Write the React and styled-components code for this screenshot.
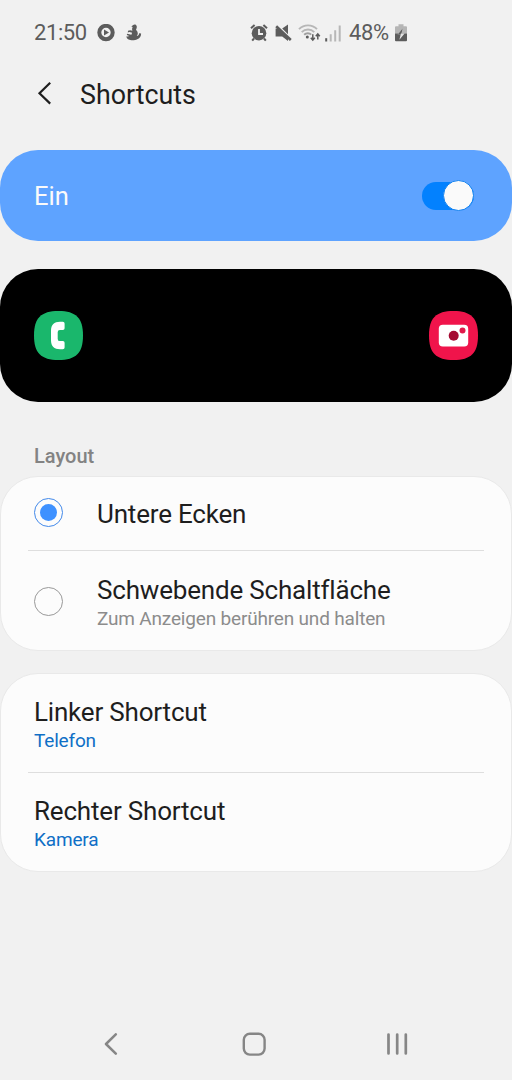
import React, { useState } from 'react';
import styled, { createGlobalStyle } from 'styled-components';

const GlobalStyle = createGlobalStyle`
  * {
    box-sizing: border-box;
  }

  body {
    margin: 0;
    background: #f1f1f1;
    font-family: Roboto, "Liberation Sans", sans-serif;
  }

  svg {
    display: block;
    flex: none;
  }
`;

const Screen = styled.div`
  width: 512px;
  height: 1080px;
  display: flex;
  flex-direction: column;
  background: #f1f1f1;
  overflow: hidden;
`;

const StatusBar = styled.div`
  height: 66px;
  padding: 0 105px 0 34px;
  display: flex;
  align-items: center;
  justify-content: space-between;
  color: #5c5c5c;
  font-size: 22px;
  line-height: 26px;
`;

const StatusGroup = styled.div`
  display: flex;
  align-items: center;
`;

const StatusText = styled.span`
  width: ${({ $width }) => $width}px;
  margin-left: ${({ $gap }) => $gap || 0}px;
  white-space: nowrap;
  letter-spacing: -0.4px;
`;

const StatusIcon = styled.svg`
  margin-left: ${({ $gap }) => $gap}px;
`;

const Header = styled.header`
  height: 84px;
  padding: 13px 0 0 37px;
  display: flex;
  align-items: flex-start;
`;

const BackButton = styled.button`
  width: 43px;
  height: 28px;
  padding: 0;
  border: 0;
  background: none;
  display: flex;
  align-items: center;
`;

const Title = styled.h1`
  margin: 0;
  font-size: 26.8px;
  line-height: 32px;
  font-weight: 400;
  color: #1e1e1e;
`;

const SwitchBar = styled.div`
  height: 91px;
  padding: 0 38px 0 34px;
  display: flex;
  align-items: center;
  justify-content: space-between;
  border-radius: 38px;
  background: #5ea3ff;
  color: #fafafa;
  font-size: 25.5px;
`;

const Switch = styled.button`
  width: 52px;
  height: 28px;
  padding: 0;
  border: 0;
  border-radius: 14px;
  display: flex;
  align-items: center;
  justify-content: ${({ $on }) => ($on ? 'flex-end' : 'flex-start')};
  background: ${({ $on }) => ($on ? '#0381fe' : '#9a9a9a')};
`;

const Knob = styled.span`
  flex: none;
  width: 31px;
  height: 31px;
  border: 1px solid #1583f0;
  border-radius: 50%;
  background: #fafafa;
`;

const Preview = styled.div`
  height: 133px;
  margin-top: 28px;
  padding: 0 34.5px 0 34px;
  display: flex;
  align-items: center;
  justify-content: space-between;
  border-radius: 38px;
  background: #000;
`;

const SectionLabel = styled.h2`
  margin: 0;
  height: 74px;
  padding: 43px 34px 0;
  font-size: 20px;
  line-height: 23px;
  font-weight: 500;
  color: #838383;
`;

const Card = styled.div`
  height: ${({ $height }) => $height}px;
  margin-bottom: 22px;
  border: 1px solid #e9e9e9;
  border-radius: 38px;
  background: #fcfcfc;
`;

const Row = styled.div`
  height: ${({ $height }) => $height}px;
  padding: ${({ $top }) => $top || 0}px 33px 0;
  display: flex;
  align-items: center;
`;

const Divider = styled.div`
  height: 1px;
  margin: 0 27px;
  background: #dedede;
`;

const Radio = styled.span`
  width: 29px;
  height: 29px;
  margin: 0 34px 2px 0;
  flex: none;
  display: flex;
  align-items: center;
  justify-content: center;
  border: 1.5px solid ${({ $checked }) => ($checked ? '#4289ea' : '#999')};
  border-radius: 50%;

  &::after {
    content: '';
    display: ${({ $checked }) => ($checked ? 'block' : 'none')};
    width: 17px;
    height: 17px;
    border-radius: 50%;
    background: #3e91ff;
  }
`;

const Label = styled.div`
  font-size: 26px;
  line-height: 30px;
  letter-spacing: -0.19px;
  color: #1e1e1e;
  white-space: nowrap;
`;

const Hint = styled.div`
  font-size: 19px;
  line-height: 22px;
  margin-top: 3px;
  letter-spacing: -0.18px;
  color: ${({ $accent }) => ($accent ? '#0f6fc6' : '#8c8c8c')};
  white-space: nowrap;
`;

const NavBar = styled.nav`
  height: 72px;
  margin-top: auto;
  padding: 0 104px;
  display: flex;
  align-items: center;
`;

const NavButton = styled.button`
  width: ${({ $width }) => $width}px;
  height: 24px;
  padding: 0;
  border: 0;
  background: none;
  display: flex;
  align-items: center;
`;

const LeftIcons = () => (
  <>
    <StatusIcon $gap={10} width="18" height="18" viewBox="0 0 18 18">
      <circle cx="9" cy="8.5" r="6.7" fill="none" stroke="#5c5c5c" strokeWidth="4" />
      <path d="M7 5.6l5 3-5 3z" fill="#5c5c5c" />
    </StatusIcon>
    <StatusIcon $gap={11} width="16" height="18" viewBox="0 0 16 18">
      <path
        d="M7.2.9C8.2-.1 10.6.3 10.8 2.4c.1 1.5-.5 2.5-.8 3.5 1.4.8 1.8 2.2 1.8 4l-1 2c1.3-.1 2.2-.8 2.3-2.7l2 .2c.1 2.7-1.5 5.2-3.9 5.9-2.1 1.2-6.6 1.3-8.6.2C1.2 14.8.3 13.5.5 12.3c.9.3 2 .2 2.8-.3L.8 11l.4-1.2 4.2.9.7-1.9-2.7-.8-1.6.4.2-1.6 2.1-.6 2.3.5c-.5-1.3-.4-3 .3-3.8L5.3 2.6z"
        fill="#5c5c5c"
      />
    </StatusIcon>
  </>
);

const AlarmIcon = () => (
  <StatusIcon $gap={0} width="18" height="18" viewBox="0 0 18 18">
    <path d="M1 4.3L4.6 1M17 4.3L13.4 1M4 14.5l-1.8 2.2M14 14.5l1.8 2.2" stroke="#5c5c5c" strokeWidth="2" fill="none" />
    <circle cx="9" cy="9.2" r="7.3" fill="#5c5c5c" />
    <path d="M9 5v5h4" fill="none" stroke="#f1f1f1" strokeWidth="1.8" />
  </StatusIcon>
);

const MuteIcon = () => (
  <StatusIcon $gap={7} width="17" height="18" viewBox="0 0 17 18">
    <path d="M.6 4.6h3.2L13 13.8V17l-5.8-4.4H.6zM7.2 4.6L13 .4v9.8z" fill="#5c5c5c" />
    <path d="M1.2 2.2L15.8 16" stroke="#5c5c5c" strokeWidth="2.6" />
  </StatusIcon>
);

const WifiIcon = () => (
  <StatusIcon $gap={6} width="24" height="18" viewBox="0 0 24 18">
    <g fill="none" stroke="#b7b7b7" strokeWidth="1.9">
      <path d="M1 5.2C6 .1 14 .1 19 5.2" />
      <path d="M3.7 8.1c3.5-3.5 9.1-3.5 12.6 0" />
    </g>
    <path d="M6.2 10.7c2-2 5.2-2 7 0" fill="none" stroke="#a0a0a0" strokeWidth="2" />
    <circle cx="9.3" cy="13" r="1.5" fill="#5c5c5c" />
    <path d="M14.8 10.3v5.4M12.8 13.8l2 2.3 2-2.3M19.8 15.6v-5.4M17.8 12.2l2-2.3 2 2.3" fill="none" stroke="#5c5c5c" strokeWidth="1.5" />
  </StatusIcon>
);

const SignalIcon = () => (
  <StatusIcon $gap={3} width="16" height="17" viewBox="0 0 16 17">
    <path d="M1.2 13.2v3.3" stroke="#5c5c5c" strokeWidth="2" />
    <path d="M5.7 9.2v7.3M10.2 5.2v11.3M14.7.6v15.9" stroke="#b7b7b7" strokeWidth="2" />
  </StatusIcon>
);

const BatteryIcon = () => (
  <StatusIcon $gap={6} width="12" height="18" viewBox="0 0 12 18">
    <path d="M3.5.3h5v2H11q1 0 1 1v6.5H0V3.3q0-1 1-1h2.5z" fill="#b5b5b5" />
    <path d="M0 9.5h12v6.8q0 1-1 1H1q-1 0-1-1z" fill="#5c5c5c" />
    <path d="M7.6 4.6l-5 6.2h3l-1.2 5 5.2-6.4H6.5z" fill="#e4e4e4" />
    <path d="M7.6 4.6l-5 6.2h3l.3-1.4h.6z" fill="#5c5c5c" />
  </StatusIcon>
);

// same squircle for both app icons
const squircle = 'M24.5 0C42 0 49 7 49 24.5S42 49 24.5 49 0 42 0 24.5 7 0 24.5 0z';

const PhoneIcon = () => (
  <svg width="49" height="49" viewBox="0 0 49 49">
    <path d={squircle} fill="#1ab76c" />
    <path
      d="M26 10.8h2.8q1.8 0 1.8 1.8v4.6q0 1.7-1.7 1.7h-3q-2.2 0-2.2 2.2v6.8q0 2.2 2.2 2.2h3q1.7 0 1.7 1.7v4.6q0 1.8-1.8 1.8H26c-5.8 0-9-3-9-9v-9.4c0-6 3.2-9 9-9z"
      fill="#fff"
    />
  </svg>
);

const CameraIcon = () => (
  <svg width="49" height="49" viewBox="0 0 49 49">
    <path d={squircle} fill="#f0144b" />
    <rect x="9.8" y="13.8" width="29.4" height="21.7" rx="4" fill="#fff" />
    <circle cx="24.7" cy="24.7" r="5" fill="#a50a32" />
    <circle cx="33.5" cy="19.6" r="3" fill="#e01a4b" />
  </svg>
);

const layouts = [
  { id: 'corners', title: 'Untere Ecken', height: 73, top: 0 },
  { id: 'floating', title: 'Schwebende Schaltfläche', hint: 'Zum Anzeigen berühren und halten', height: 99, top: 4 },
];

const shortcuts = [
  { title: 'Linker Shortcut', app: 'Telefon', height: 98 },
  { title: 'Rechter Shortcut', app: 'Kamera', height: 98 },
];

const App = () => {
  const [enabled, setEnabled] = useState(true);
  const [layout, setLayout] = useState('corners');

  return (
    <Screen>
      <GlobalStyle />
      <StatusBar>
        <StatusGroup>
          <StatusText $width={53}>21:50</StatusText>
          <LeftIcons />
        </StatusGroup>
        <StatusGroup>
          <AlarmIcon />
          <MuteIcon />
          <WifiIcon />
          <SignalIcon />
          <StatusText $width={40} $gap={8}>48%</StatusText>
          <BatteryIcon />
        </StatusGroup>
      </StatusBar>

      <Header>
        <BackButton aria-label="Zurück">
          <svg width="16" height="24" viewBox="0 0 16 24">
            <path d="M13.2 1.8L2.5 12.3l10.7 10.3" fill="none" stroke="#1e1e1e" strokeWidth="2.2" />
          </svg>
        </BackButton>
        <Title>Shortcuts</Title>
      </Header>

      <SwitchBar>
        <span>Ein</span>
        <Switch $on={enabled} onClick={() => setEnabled(!enabled)} aria-label="Ein">
          <Knob />
        </Switch>
      </SwitchBar>

      <Preview>
        <PhoneIcon />
        <CameraIcon />
      </Preview>

      <SectionLabel>Layout</SectionLabel>
      <Card $height={175}>
        {layouts.map((item, index) => (
          <React.Fragment key={item.id}>
            {index > 0 && <Divider />}
            <Row $height={item.height} $top={item.top} onClick={() => setLayout(item.id)}>
              <Radio $checked={layout === item.id} />
              <div>
                <Label>{item.title}</Label>
                {item.hint && <Hint>{item.hint}</Hint>}
              </div>
            </Row>
          </React.Fragment>
        ))}
      </Card>

      <Card $height={199}>
        {shortcuts.map((item, index) => (
          <React.Fragment key={item.title}>
            {index > 0 && <Divider />}
            <Row $height={item.height} $top={3}>
              <div>
                <Label>{item.title}</Label>
                <Hint $accent>{item.app}</Hint>
              </div>
            </Row>
          </React.Fragment>
        ))}
      </Card>

      <NavBar>
        <NavButton $width={138} aria-label="Zurück">
          <svg width="14" height="22" viewBox="0 0 14 22">
            <path d="M11.8 1.3L2 11l9.8 9.6" fill="none" stroke="#868686" strokeWidth="2.5" strokeLinecap="round" strokeLinejoin="round" />
          </svg>
        </NavButton>
        <NavButton $width={144} aria-label="Startseite">
          <svg width="24" height="24" viewBox="0 0 24 24">
            <rect x="1.8" y="1.8" width="20.8" height="20.8" rx="6" fill="none" stroke="#868686" strokeWidth="2.4" />
          </svg>
        </NavButton>
        <NavButton $width={22} aria-label="Letzte Apps">
          <svg width="22" height="22" viewBox="0 0 22 22">
            <path d="M2.5 1.5v19M11.2 1.5v19M19.8 1.5v19" stroke="#868686" strokeWidth="2.7" strokeLinecap="round" />
          </svg>
        </NavButton>
      </NavBar>
    </Screen>
  );
};

export default App;
